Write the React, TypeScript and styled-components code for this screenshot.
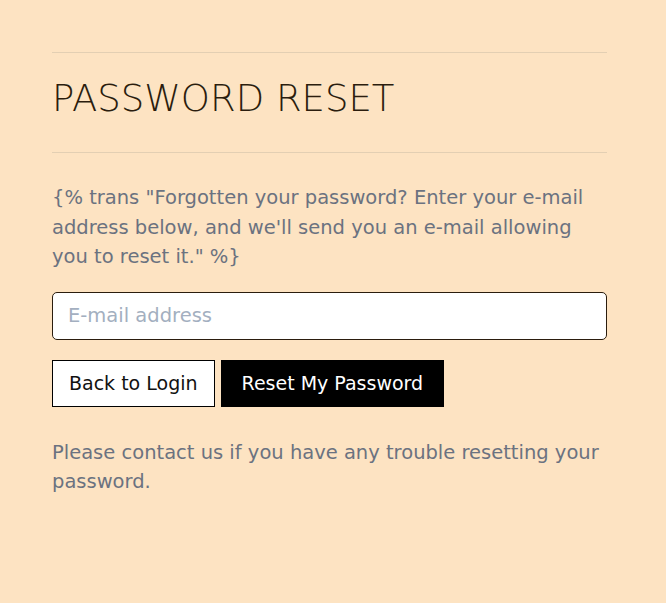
import React from "react";
import styled, { createGlobalStyle } from "styled-components";

const Global = createGlobalStyle`
  html, body { margin: 0; padding: 0; background: #fde3c2; }
  body { font-family: "DejaVu Sans", "Open Sans", sans-serif; }
  * { box-sizing: border-box; }
`;

const Page = styled.main`
  padding: 52px 59px 40px 52px;
  min-height: 603px;
`;

const Rule = styled.hr`
  border: 0;
  border-top: 1px solid #e3cfb3;
  margin: 0;
`;

const Title = styled.h1`
  margin: 0;
  padding: 23px 0 30px;
  font-size: 37px;
  line-height: 46px;
  font-weight: 200;
  color: #2b1d0e;
`;

const Text = styled.p<{ $top?: number }>`
  margin: ${(p) => p.$top ?? 0}px 0 0;
  font-size: 19.5px;
  line-height: 29.5px;
  color: #6b7280;
  font-weight: 400;
`;

const Input = styled.input`
  display: block;
  width: 100%;
  height: 48px;
  margin-top: 20px;
  padding: 0 15px;
  border: 1px solid #2b1d0e;
  border-radius: 5px;
  background: #fff;
  font-family: inherit;
  font-size: 19.5px;
  color: #2b1d0e;
  &::placeholder { color: #a3afc0; }
`;

const Actions = styled.div`
  display: flex;
  gap: 6px;
  margin-top: 20px;
`;

const Button = styled.button<{ $primary?: boolean }>`
  height: 47px;
  padding: 0 ${(p) => (p.$primary ? 20 : 16)}px;
  border: 1px solid #000;
  background: ${(p) => (p.$primary ? "#000" : "#fff")};
  color: ${(p) => (p.$primary ? "#fff" : "#111")};
  font-family: inherit;
  font-size: 19px;
  font-weight: 400;
  cursor: pointer;
`;

export default function App() {
  return (
    <>
      <Global />
      <Page>
        <Rule />
        <Title>PASSWORD RESET</Title>
        <Rule />
        <Text $top={30}>
          {`{% trans "Forgotten your password? Enter your e-mail address below, and we'll send you an e-mail allowing you to reset it." %}`}
        </Text>
        <Input type="email" placeholder="E-mail address" />
        <Actions>
          <Button>Back to Login</Button>
          <Button $primary>Reset My Password</Button>
        </Actions>
        <Text $top={31}>
          Please contact us if you have any trouble resetting your password.
        </Text>
      </Page>
    </>
  );
}
